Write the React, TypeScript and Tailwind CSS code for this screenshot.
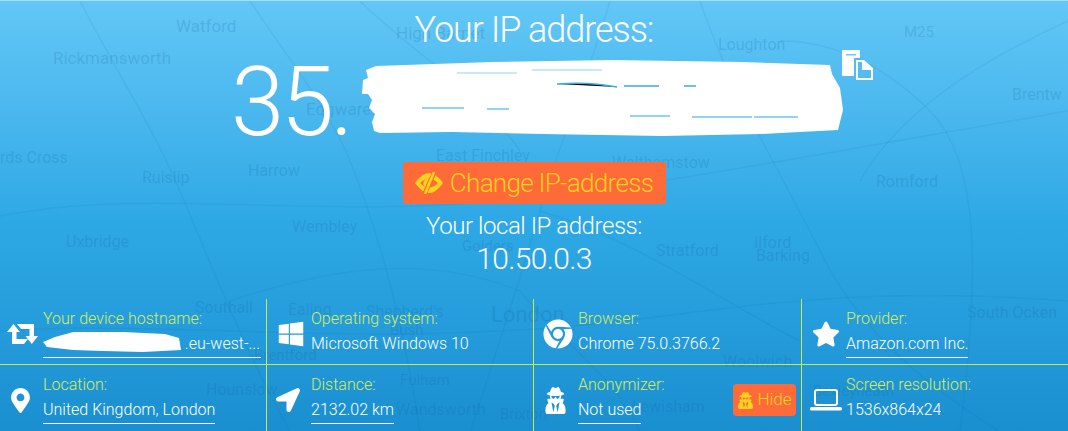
import type { ReactNode } from "react";
import {
  FaChrome,
  FaLocationArrow,
  FaMapMarkerAlt,
  FaStar,
  FaUserSecret,
  FaWindows,
} from "react-icons/fa";

const mapLabels: [string, number, number, number][] = [
  ["Watford", 176, 17, 17],
  ["Rickmansworth", 53, 49, 17],
  ["High Barnet", 396, 24, 17],
  ["Loughton", 718, 36, 16],
  ["M25", 904, 24, 15],
  ["Brentw", 1012, 86, 16],
  ["Edgware", 306, 100, 17],
  ["rds Cross", 0, 149, 16],
  ["Ruislip", 142, 169, 16],
  ["Harrow", 248, 162, 16],
  ["East Finchley", 436, 147, 16],
  ["Walthamstow", 612, 154, 16],
  ["Romford", 876, 173, 16],
  ["Uxbridge", 66, 233, 16],
  ["Wembley", 292, 218, 16],
  ["Ilford", 754, 234, 16],
  ["Stratford", 656, 242, 16],
  ["Barking", 756, 247, 16],
  ["Golders", 462, 238, 15],
  ["Southall", 195, 299, 16],
  ["Ealing", 288, 301, 16],
  ["Shepherd's", 366, 303, 16],
  ["London", 491, 303, 22],
  ["South Ocken", 967, 304, 16],
  ["Bush", 390, 322, 15],
  ["Brentford", 254, 347, 15],
  ["Woolwich", 723, 353, 16],
  ["Hounslow", 206, 381, 16],
  ["Fulham", 400, 372, 15],
  ["Wandsworth", 396, 401, 16],
  ["Lewisham", 632, 398, 16],
  ["Bexleyheath", 813, 383, 15],
  ["Brixton", 500, 406, 15],
];

function MapBackdrop() {
  return (
    <div className="absolute inset-0 overflow-hidden">
      <svg className="absolute inset-0" width="1068" height="431" fill="none" stroke="#0f5f9c" strokeOpacity="0.09" strokeWidth="1.5">
        <path d="M250 0C290 60 330 110 350 160S400 300 420 431" />
        <path d="M0 215C130 190 260 210 420 205S720 170 1068 110" />
        <path d="M80 0C110 60 150 120 180 190S240 340 290 431" />
        <path d="M610 0C590 70 560 140 540 210S500 340 470 431" />
        <path d="M780 40C830 40 880 60 930 110S980 270 960 431" />
        <path d="M700 0C730 90 780 170 820 250S920 380 1000 431" />
        <path d="M0 330C150 320 300 340 500 330S800 280 1068 300" />
        <path d="M230 300C320 270 420 250 520 290" />
        <path d="M540 210C640 240 720 300 800 340" />
        <path d="M1068 20C980 60 900 110 860 180" />
        <path d="M520 290C560 340 620 380 640 431" />
        <path d="M360 0C410 50 480 90 520 150" />
      </svg>
      {mapLabels.map(([label, x, y, size]) => (
        <span
          key={label}
          className="absolute font-normal leading-none whitespace-nowrap text-[#0f5f9c]/20"
          style={{ left: x, top: y, fontSize: size }}
        >
          {label}
        </span>
      ))}
    </div>
  );
}

function RetweetIcon() {
  return (
    <svg width="31" height="20" viewBox="0 0 31 20" fill="#fff">
      <path d="M6.500 0 13 8H9.500V15H21L17 20H5V8H0z" />
      <path d="M10 0H27V12H31L24.800 20 18.500 12H22.500V5H14z" />
    </svg>
  );
}

function LaptopIcon() {
  return (
    <svg width="32" height="22" viewBox="0 0 32 22">
      <rect x="5" y="1" width="22" height="15" rx="2" fill="none" stroke="#fff" strokeWidth="2" />
      <rect x="0" y="18" width="32" height="3.500" rx="1.500" fill="#fff" />
    </svg>
  );
}

function CopyIcon() {
  return (
    <svg width="31" height="30" viewBox="0 0 31 30" fill="#fff">
      <path d="M1 0H17a1 1 0 0 1 1 1V8H12V26H1a1 1 0 0 1-1-1V1a1 1 0 0 1 1-1z" />
      <rect x="4" y="4" width="10" height="1.500" fill="#6cc8f2" />
      <path fillRule="evenodd" d="M14 10H22L31 18V30H14zM16 12V28H29V20H20V12z" />
      <path d="M22 11 30 18H22z" />
    </svg>
  );
}

function EyeSlashIcon() {
  return (
    <svg width="28" height="22" viewBox="0 0 28 22" fill="#ffd21f">
      <path
        fillRule="evenodd"
        d="M0 11Q7 1 14 1T28 11Q21 21 14 21T0 11zM5 11Q10 15.500 14 15.500T23 11Q18 6.500 14 6.500T5 11z"
      />
      <path d="M14.500 7A4.500 4.500 0 0 0 10.500 15z" />
      <path d="M19 1 10 21" stroke="#ff6a39" strokeWidth="4.500" />
      <path d="M19 0 10 22" stroke="#ffd21f" strokeWidth="2.500" />
    </svg>
  );
}

function Scribble() {
  return (
    <svg width="482" height="78" viewBox="0 0 482 78" className="shrink-0">
      <path
        fill="#fff"
        d="M14 6 130 2 250 0 380 2 468 5 470 14 478 28 481 50 476 70 400 74 300 76 180 74 90 72 18 73 12 71 10 62 13 54 7 48 10 40 6 34 0 34 1 20 6 18 4 10z"
      />
      <path d="M95 13h60M170 10h70" stroke="#8fd4f4" strokeWidth="1" />
      <path d="M195 24c25-2 45 0 60 3M262 26h35M322 26h12" stroke="#3fa9e2" strokeWidth="1.500" />
      <path d="M60 48h42M125 49h22M268 56h40M330 57h60M392 57h44" stroke="#6cc5f0" strokeWidth="1.500" />
    </svg>
  );
}

function HostnameBlob() {
  return (
    <svg width="138" height="21" viewBox="0 0 138 21" className="absolute left-0 top-[-1px]">
      <path fill="#fff" d="M0 11 12 6 34 0 80 1 122 3 136 7 138 19 100 21 60 20 30 19 4 16z" />
    </svg>
  );
}

function Cell({
  icon,
  label,
  value,
  underline = false,
  action,
  top = false,
  last = false,
  first = false,
}: {
  icon: ReactNode;
  label: string;
  value: ReactNode;
  underline?: boolean;
  action?: ReactNode;
  top?: boolean;
  last?: boolean;
  first?: boolean;
}) {
  return (
    <div
      className={`flex items-start min-w-0 ${first ? "pl-[1px]" : "pl-[3px]"} ${last ? "" : "border-r border-[#c9e84a]"} ${top ? "border-b border-[#c9e84a]" : ""}`}
    >
      <div className={`${first ? "w-[42px]" : "w-[41px]"} h-[66px] pt-[4px] shrink-0 flex items-center justify-center text-white`}>
        {icon}
      </div>
      <div className="min-w-0 flex-1 pt-[8px]">
        <div className="text-[16px] leading-[24px] text-[#d4ee5f]">{label}</div>
        <div
          className={`mt-[1px] pb-[1px] text-[16px] leading-[24px] text-white w-fit max-w-[218px] truncate ${underline ? "border-b border-white" : ""}`}
        >
          {value}
        </div>
      </div>
      {action}
    </div>
  );
}

export default function App() {
  return (
    <div
      className="relative w-[1068px] h-[431px] overflow-hidden bg-gradient-to-b from-[#62c7f6] via-[#2fa9e6] to-[#1a8fd0] border-t border-[#a5def8] font-light text-white flex flex-col"
      style={{ fontFamily: "Roboto, 'Liberation Sans', sans-serif" }}
    >
      <MapBackdrop />
      <div className="relative flex flex-col items-center flex-1 min-h-0">
        <h1 className="text-[36px] leading-[42px] mt-[8px] font-light tracking-[-1.05px]">Your IP address:</h1>
        <div className="flex items-start self-start ml-[231px] mt-[6px] h-[95px]">
          <span className="text-[96px] leading-[90px] tracking-[-3.5px]">35.</span>
          <div className="ml-[12px] mt-[3px]">
            <Scribble />
          </div>
          <div className="ml-[-2px] mt-[-7px]">
            <CopyIcon />
          </div>
        </div>
        <button
          type="button"
          className="mt-[10px] h-[42px] w-[263px] rounded-[3px] bg-[#ff6a39] text-[#ffd21f] text-[26px] font-light tracking-[-0.7px] flex items-center justify-center gap-[7px]"
        >
          <EyeSlashIcon />
          Change IP-address
        </button>
        <div className="text-[24px] leading-[28px] mt-[8px] tracking-[-0.45px]">Your local IP address:</div>
        <div className="text-[30px] leading-[36px] mt-[1px] tracking-[-0.66px]">10.50.0.3</div>
      </div>

      <div className="relative grid grid-cols-[267px_267px_268px_266px] grid-rows-[66px_66px] h-[132px] shrink-0">
        <Cell
          first
          top
          underline
          icon={<RetweetIcon />}
          label="Your device hostname:"
          value={
            <span className="relative block w-[218px] text-right pr-[1px]">
              <HostnameBlob />
              .eu-west-...
            </span>
          }
        />
        <Cell top icon={<FaWindows className="text-[28px]" />} label="Operating system:" value="Microsoft Windows 10" />
        <Cell top icon={<FaChrome className="text-[30px]" />} label="Browser:" value="Chrome 75.0.3766.2" />
        <Cell top last underline icon={<FaStar className="text-[28px]" />} label="Provider:" value="Amazon.com Inc." />
        <Cell
          first
          underline
          icon={<FaMapMarkerAlt className="text-[25px] -ml-[3px]" />}
          label="Location:"
          value="United Kingdom, London"
        />
        <Cell
          underline
          icon={<FaLocationArrow className="text-[24px] -ml-[6px]" />}
          label="Distance:"
          value="2132.02 km"
        />
        <Cell
          underline
          icon={<FaUserSecret className="text-[27px] -ml-[4px] scale-x-[0.85]" />}
          label="Anonymizer:"
          value="Not used"
          action={
            <button
              type="button"
              className="mr-[5px] mt-[19px] h-[32px] w-[63px] shrink-0 rounded-[4px] bg-[#ff6a39] text-[#ffd21f] text-[17px] flex items-center justify-center gap-[3px]"
            >
              <FaUserSecret className="text-[17px]" />
              Hide
            </button>
          }
        />
        <Cell last icon={<LaptopIcon />} label="Screen resolution:" value="1536x864x24" />
      </div>
    </div>
  );
}
